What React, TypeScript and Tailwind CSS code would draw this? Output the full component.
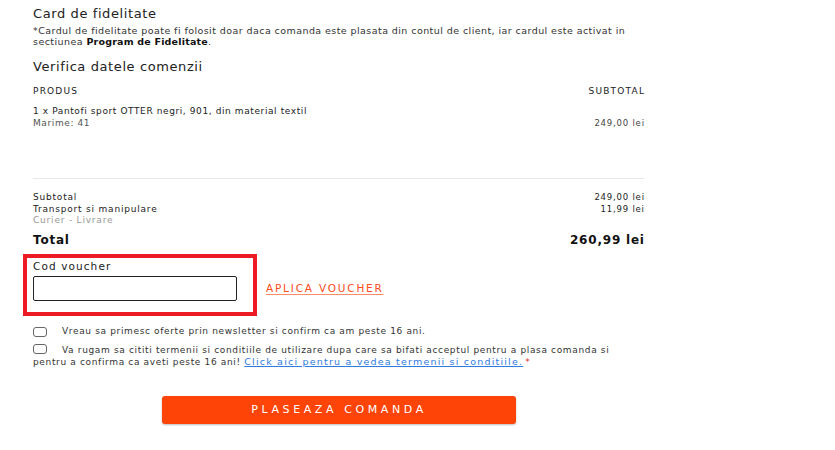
const font = { fontFamily: '"DejaVu Sans", "Liberation Sans", sans-serif' };

export default function App() {
  return (
    <div className="w-[835px] h-[450px] bg-white text-[#222] overflow-hidden font-['DejaVu_Sans',sans-serif]">
      <div className="ml-[33px] w-[611px] pt-[6px]">
        <h2 className="text-[13px] leading-[16px] tracking-[0.6px] text-[#222]">Card de fidelitate</h2>
        <p className="mt-[3px] whitespace-nowrap text-[9.5px] leading-[11px] tracking-[0.43px] text-[#333]">
          *Cardul de fidelitate poate fi folosit doar daca comanda este plasata din contul de client, iar cardul este activat in
          <br />
          sectiunea <span className="font-bold tracking-[0.2px] text-[#111]">Program de Fidelitate</span>.
        </p>

        <h2 className="mt-[12px] text-[13px] leading-[16px] tracking-[0.6px]">Verifica datele comenzii</h2>

        <div className="mt-[11px] flex justify-between text-[9px] leading-[10px] tracking-[1.2px] text-[#222]">
          <span>PRODUS</span>
          <span className="-mr-[1.2px]">SUBTOTAL</span>
        </div>

        <div className="mt-[9px] flex justify-between items-end">
          <div className="text-[9px] leading-[12px] tracking-[0.6px]">
            <div className="text-[#222]">1 x Pantofi sport OTTER negri, 901, din material textil</div>
            <div className="text-[#555]">Marime: 41</div>
          </div>
          <span className="text-[8.5px] leading-[12px] tracking-[0.8px] -mr-[0.8px] text-[#444]">249,00 lei</span>
        </div>

        <div className="mt-[49px] border-t border-[#e8e8e8]" />

        <div className="mt-[12px] flex justify-between text-[9px] leading-[12px] tracking-[0.8px]">
          <div>
            <div className="text-[#222]">Subtotal</div>
            <div className="text-[#222]">Transport si manipulare</div>
            <div className="text-[#999] leading-[10px]">Curier - Livrare</div>
          </div>
          <div className="text-right text-[#222] -mr-[0.8px] text-[8.5px]">
            <div>249,00 lei</div>
            <div>11,99 lei</div>
          </div>
        </div>

        <div className="mt-[8px] flex justify-between text-[12px] leading-[14px] tracking-[0.8px] font-bold text-[#111]">
          <span>Total</span>
          <span className="-mr-[0.8px]">260,99 lei</span>
        </div>
      </div>

      <div className="mt-[7px] ml-[23px] flex items-center">
        <div className="w-[234px] h-[62px] border-[4px] border-[#ed1c24] pl-[6px] pt-[2px]">
          <div className="text-[10.5px] leading-[12px] tracking-[1.1px] text-[#222]">Cod voucher</div>
          <div className="mt-[4px] w-[204px] h-[25px] border border-[#222] rounded-[2px] bg-white" />
        </div>
        <a className="ml-[9px] mt-[8px] text-[10.5px] tracking-[1.8px] text-[#ff4a1a] underline underline-offset-2 decoration-[#ff8a6a]">
          APLICA VOUCHER
        </a>
      </div>

      <div className="ml-[33px] w-[611px] mt-[10px] text-[9px] leading-[11px] tracking-[0.65px] text-[#333]">
        <label className="flex items-center">
          <span className="w-[14px] h-[10px] border border-[#666] rounded-[3px] shrink-0" />
          <span className="ml-[15px]">Vreau sa primesc oferte prin newsletter si confirm ca am peste 16 ani.</span>
        </label>
        <div className="mt-[7px]">
          <span className="inline-block align-[-1px] w-[14px] h-[10px] border border-[#666] rounded-[3px] mr-[15px]" />
          Va rugam sa cititi termenii si conditiile de utilizare dupa care sa bifati acceptul pentru a plasa comanda si
          pentru a confirma ca aveti peste 16 ani!{' '}
          <a className="text-[9.5px] tracking-[1.2px] text-[#2f7be0] underline">
            Click aici pentru a vedea termenii si conditiile.
          </a>
          <span className="ml-[2px] text-[#e03030]">*</span>
        </div>
      </div>

      <div className="mt-[28px] ml-[162px]">
        <button
          type="button"
          style={font}
          className="w-[354px] h-[28px] rounded-[3px] bg-[#ff4408] text-white text-[11px] tracking-[3.6px] shadow-[0_1px_2px_rgba(0,0,0,0.25)]"
        >
          PLASEAZA COMANDA
        </button>
      </div>
    </div>
  );
}
